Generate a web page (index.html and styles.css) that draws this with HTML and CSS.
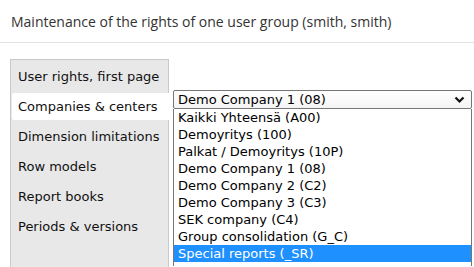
FILE: index.html
```html
<!DOCTYPE html>
<html lang="en">

<head>
    <meta charset="UTF-8">
    <meta name="viewport" content="width=device-width, initial-scale=1.0">
    <title>User group rights</title>
    <link rel="stylesheet" href="styles.css">
</head>

<body>
    <header class="page-header">
        <h1>Maintenance of the rights of one user group (smith, smith)</h1>
    </header>

    <div class="content">
        <!-- Tabs -->
        <nav class="tabs">
            <div class="tab">User rights, first page</div>
            <div class="tab active">Companies &amp; centers</div>
            <div class="tab">Dimension limitations</div>
            <div class="tab">Row models</div>
            <div class="tab">Report books</div>
            <div class="tab">Periods &amp; versions</div>
        </nav>

        <!-- Company picker, shown open -->
        <div class="picker">
            <div class="select">
                <span>Demo Company 1 (08)</span>
                <svg class="chevron" width="11" height="8" viewBox="0 0 11 8">
                    <path d="M1.5 1.5 L5.5 5.5 L9.5 1.5" fill="none" stroke="#111" stroke-width="2.2" />
                </svg>
            </div>
            <ul class="options">
                <li>Kaikki Yhteensä (A00)</li>
                <li>Demoyritys (100)</li>
                <li>Palkat / Demoyritys (10P)</li>
                <li>Demo Company 1 (08)</li>
                <li>Demo Company 2 (C2)</li>
                <li>Demo Company 3 (C3)</li>
                <li>SEK company (C4)</li>
                <li>Group consolidation (G_C)</li>
                <li class="selected">Special reports (_SR)</li>
            </ul>
        </div>
    </div>
</body>

</html>
```

FILE: styles.css
```css
/* Page */
body {
    margin: 0;
    height: 267px;
    background-color: #ffffff;
    font-family: "DejaVu Sans", Verdana, sans-serif;
    overflow: hidden;
}

/* Header Styling */
.page-header {
    height: 42px;
    border-bottom: 1px solid #e3e3e3;
    padding-left: 11px;
    display: flex;
    align-items: center;
}

.page-header h1 {
    margin: 0;
    font-family: "Open Sans", sans-serif;
    font-weight: 400;
    font-size: 14px;
    color: #333333;
}

/* Content Row */
.content {
    display: flex;
    align-items: flex-start;
    margin-top: 16px;
    padding-left: 10px;
}

/* Tabs Styling */
.tabs {
    width: 156px;
    height: 205px;
    background-color: #e8e8e8;
    border: 1px solid #c9c9c9;
    border-bottom: none;
    padding: 3px 0 0 1px;
}

.tab {
    height: 27px;
    line-height: 27px;
    margin-bottom: 3px;
    padding-left: 6px;
    font-size: 13px;
    color: #111111;
    white-space: nowrap;
}

.tab.active {
    background-color: #ffffff;
    margin-right: -1px;
    border-radius: 2px 0 0 2px;
}

/* Picker Styling */
.picker {
    margin-left: 4px;
    margin-top: 31px;
    width: 299px;
}

.select {
    height: 17px;
    border: 1px solid #767676;
    border-radius: 2px;
    background: linear-gradient(#ffffff, #f4f4f4);
    display: flex;
    align-items: center;
    justify-content: space-between;
    padding: 0 6px 0 4px;
    font-size: 13px;
    color: #000000;
}

.chevron {
    display: block;
}

.options {
    list-style: none;
    margin: 0;
    padding: 0;
    height: 157px;
    border-left: 1px solid #767676;
    border-right: 1px solid #767676;
}

.options li {
    height: 17px;
    line-height: 17px;
    padding-left: 4px;
    font-size: 13px;
    color: #000000;
    white-space: nowrap;
}

.options li.selected {
    background-color: #1e90ff;
    color: #ffffff;
}
```
